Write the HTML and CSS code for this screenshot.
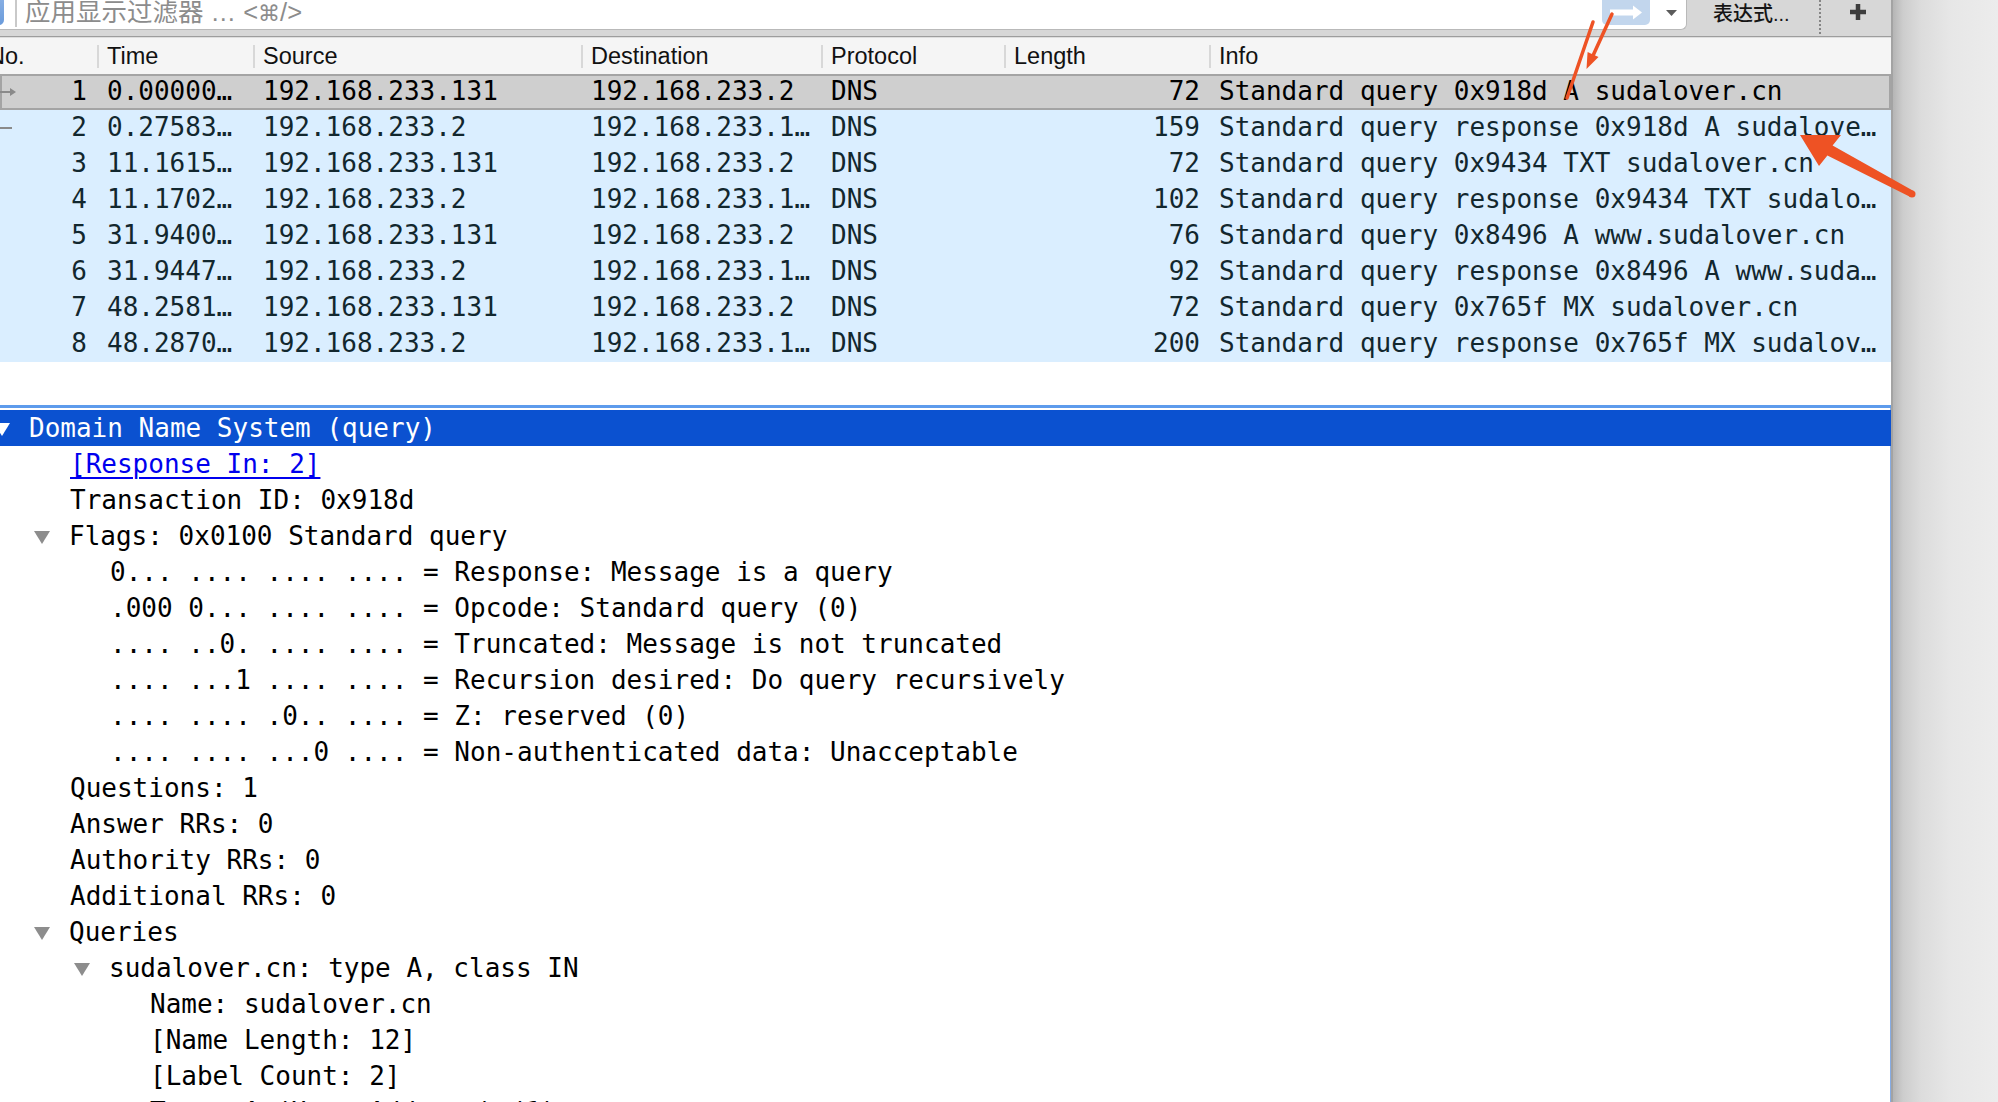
FILE: index.html
```html
<!DOCTYPE html>
<html lang="zh-CN">
<head>
<meta charset="utf-8">
<title>Wireshark</title>
<link rel="stylesheet" href="styles.css">
</head>
<body>
<div class="app">
  <div class="toolbar">
    <div class="filter">
      <span class="bookmark"></span>
      <span class="fsep"></span>
      <span class="placeholder">应用显示过滤器 … &lt;<span class="cmd">⌘</span>/&gt;</span>
      <span class="apply"><svg width="48" height="25" viewBox="0 0 48 25"><rect x="8" y="9.5" width="25" height="6" fill="#fff"/><polygon points="31,5.5 40,12.5 31,19.5" fill="#fff"/></svg></span>
      <span class="drop"><svg width="11" height="6" viewBox="0 0 11 6"><polygon points="0,0 11,0 5.5,6" fill="#5b5b5b"/></svg></span>
    </div>
    <div class="expr">表达式...</div>
    <div class="dots"></div>
    <div class="plus"><svg width="16" height="16" viewBox="0 0 16 16"><rect x="5.75" y="0" width="4.5" height="16" fill="#3d3d3d"/><rect x="0" y="5.75" width="16" height="4.5" fill="#3d3d3d"/></svg></div>
  </div>

  <div class="list">
    <div class="hrow">
      <div class="hc hc-no"><span>No.</span></div>
      <div class="hc">Time</div>
      <div class="hc">Source</div>
      <div class="hc">Destination</div>
      <div class="hc">Protocol</div>
      <div class="hc">Length</div>
      <div class="hc">Info</div>
    </div>
    <div class="prow sel">
      <div class="pc c-no"><svg class="ind" width="16" height="10" viewBox="0 0 16 10"><line x1="0" y1="5" x2="11" y2="5" stroke="#8a8a8a" stroke-width="2"/><polygon points="10,1 16,5 10,9" fill="#8a8a8a"/></svg><span class="num">1</span></div>
      <div class="pc">0.00000…</div>
      <div class="pc">192.168.233.131</div>
      <div class="pc">192.168.233.2</div>
      <div class="pc">DNS</div>
      <div class="pc c-len">72</div>
      <div class="pc">Standard query 0x918d A sudalover.cn</div>
    </div>
    <div class="prow">
      <div class="pc c-no"><svg class="ind" width="16" height="10" viewBox="0 0 16 10"><line x1="0" y1="5" x2="12" y2="5" stroke="#8a8a8a" stroke-width="2"/></svg><span class="num">2</span></div>
      <div class="pc">0.27583…</div>
      <div class="pc">192.168.233.2</div>
      <div class="pc">192.168.233.1…</div>
      <div class="pc">DNS</div>
      <div class="pc c-len">159</div>
      <div class="pc">Standard query response 0x918d A sudalove…</div>
    </div>
    <div class="prow">
      <div class="pc c-no"><span class="num">3</span></div>
      <div class="pc">11.1615…</div>
      <div class="pc">192.168.233.131</div>
      <div class="pc">192.168.233.2</div>
      <div class="pc">DNS</div>
      <div class="pc c-len">72</div>
      <div class="pc">Standard query 0x9434 TXT sudalover.cn</div>
    </div>
    <div class="prow">
      <div class="pc c-no"><span class="num">4</span></div>
      <div class="pc">11.1702…</div>
      <div class="pc">192.168.233.2</div>
      <div class="pc">192.168.233.1…</div>
      <div class="pc">DNS</div>
      <div class="pc c-len">102</div>
      <div class="pc">Standard query response 0x9434 TXT sudalo…</div>
    </div>
    <div class="prow">
      <div class="pc c-no"><span class="num">5</span></div>
      <div class="pc">31.9400…</div>
      <div class="pc">192.168.233.131</div>
      <div class="pc">192.168.233.2</div>
      <div class="pc">DNS</div>
      <div class="pc c-len">76</div>
      <div class="pc">Standard query 0x8496 A www.sudalover.cn</div>
    </div>
    <div class="prow">
      <div class="pc c-no"><span class="num">6</span></div>
      <div class="pc">31.9447…</div>
      <div class="pc">192.168.233.2</div>
      <div class="pc">192.168.233.1…</div>
      <div class="pc">DNS</div>
      <div class="pc c-len">92</div>
      <div class="pc">Standard query response 0x8496 A www.suda…</div>
    </div>
    <div class="prow">
      <div class="pc c-no"><span class="num">7</span></div>
      <div class="pc">48.2581…</div>
      <div class="pc">192.168.233.131</div>
      <div class="pc">192.168.233.2</div>
      <div class="pc">DNS</div>
      <div class="pc c-len">72</div>
      <div class="pc">Standard query 0x765f MX sudalover.cn</div>
    </div>
    <div class="prow">
      <div class="pc c-no"><span class="num">8</span></div>
      <div class="pc">48.2870…</div>
      <div class="pc">192.168.233.2</div>
      <div class="pc">192.168.233.1…</div>
      <div class="pc">DNS</div>
      <div class="pc c-len">200</div>
      <div class="pc">Standard query response 0x765f MX sudalov…</div>
    </div>
  </div>

  <div class="details">
    <div class="drow l0 sel"><span class="tw open"></span><span>Domain Name System (query)</span></div>
    <div class="drow l1"><span class="tw"></span><span class="link">[Response In: 2]</span></div>
    <div class="drow l1"><span class="tw"></span><span>Transaction ID: 0x918d</span></div>
    <div class="drow l1"><span class="tw open"></span><span>Flags: 0x0100 Standard query</span></div>
    <div class="drow l2"><span class="tw"></span><span>0... .... .... .... = Response: Message is a query</span></div>
    <div class="drow l2"><span class="tw"></span><span>.000 0... .... .... = Opcode: Standard query (0)</span></div>
    <div class="drow l2"><span class="tw"></span><span>.... ..0. .... .... = Truncated: Message is not truncated</span></div>
    <div class="drow l2"><span class="tw"></span><span>.... ...1 .... .... = Recursion desired: Do query recursively</span></div>
    <div class="drow l2"><span class="tw"></span><span>.... .... .0.. .... = Z: reserved (0)</span></div>
    <div class="drow l2"><span class="tw"></span><span>.... .... ...0 .... = Non-authenticated data: Unacceptable</span></div>
    <div class="drow l1"><span class="tw"></span><span>Questions: 1</span></div>
    <div class="drow l1"><span class="tw"></span><span>Answer RRs: 0</span></div>
    <div class="drow l1"><span class="tw"></span><span>Authority RRs: 0</span></div>
    <div class="drow l1"><span class="tw"></span><span>Additional RRs: 0</span></div>
    <div class="drow l1"><span class="tw open"></span><span>Queries</span></div>
    <div class="drow l2"><span class="tw open"></span><span>sudalover.cn: type A, class IN</span></div>
    <div class="drow l3"><span class="tw"></span><span>Name: sudalover.cn</span></div>
    <div class="drow l3"><span class="tw"></span><span>[Name Length: 12]</span></div>
    <div class="drow l3"><span class="tw"></span><span>[Label Count: 2]</span></div>
    <div class="drow l3"><span class="tw"></span><span>Type: A (Host Address) (1)</span></div>
  </div>
</div>
<div class="desk"></div>

<svg class="annot" width="1998" height="1102" viewBox="0 0 1998 1102">
  <line x1="1593" y1="22" x2="1567" y2="98" stroke="#ee5224" stroke-width="3.5" stroke-linecap="round"/>
  <line x1="1612" y1="14" x2="1591" y2="60" stroke="#ee5224" stroke-width="3.5" stroke-linecap="round"/>
  <polygon points="1586.5,69 1598.5,56.9 1587.6,51.9" fill="#ee5224"/>
  <polygon points="1800,135 1841,135 1832.6,145.6 1913.6,190.9 1910.4,197.1 1827.4,155.4 1819,166" fill="#ee5224"/>
  <circle cx="1912" cy="194" r="3.5" fill="#ee5224"/>
</svg>
</body>
</html>
```

FILE: styles.css
```css
html, body {
  margin: 0;
  padding: 0;
}

body {
  width: 1998px;
  height: 1102px;
  overflow: hidden;
  display: flex;
  position: relative;
  font-family: "Liberation Sans", "Noto Sans CJK SC", sans-serif;
  background: #ececec;
}

.app {
  flex: none;
  width: 1891px;
  height: 1102px;
  border-right: 2px solid #a3a3a3;
  background: #ffffff;
  display: flex;
  flex-direction: column;
  overflow: hidden;
}

.desk {
  flex: 1;
  background: linear-gradient(to right, #b5b5b5 0px, #cdcdcd 10px, #dcdcdc 28px, #e7e7e7 58px, #ececec 105px);
}

/* ---------- toolbar ---------- */
.toolbar {
  flex: none;
  height: 36px;
  background: #d7d7d7;
  border-bottom: 1px solid #9d9d9d;
  display: flex;
  align-items: flex-start;
}

.filter {
  flex: none;
  margin-left: -12px;
  width: 1699px;
  height: 30px;
  box-sizing: border-box;
  background: #ffffff;
  border: 1px solid #b9b9b9;
  border-top: none;
  border-radius: 0 0 6px 6px;
  display: flex;
  align-items: flex-start;
}

.bookmark {
  flex: none;
  width: 15px;
  height: 25px;
  background: linear-gradient(#86aee3, #6a9bdb);
  border-radius: 0 0 5px 0;
}

.fsep {
  flex: none;
  margin-left: 11px;
  width: 2px;
  height: 27px;
  background: #c9c9c9;
}

.placeholder {
  margin-left: 8px;
  font-family: "Liberation Sans", "Noto Sans CJK SC", "DejaVu Sans", sans-serif;
  font-size: 25.5px;
  line-height: 25px;
  color: #8c8c8c;
  white-space: pre;
}

.cmd {
  font-family: "DejaVu Sans", sans-serif;
  font-size: 22px;
}

.apply {
  flex: none;
  margin-left: auto;
  width: 48px;
  height: 25px;
  background: #c2d6ed;
  border-radius: 0 0 5px 5px;
  display: flex;
}

.drop {
  flex: none;
  margin-left: 16px;
  margin-right: 9px;
  margin-top: 10px;
  display: flex;
}

.expr {
  flex: none;
  width: 132px;
  box-sizing: border-box;
  padding-left: 26px;
  padding-top: 1px;
  font-family: "Liberation Sans", "Noto Sans CJK SC", sans-serif;
  font-size: 20px;
  font-weight: 500;
  line-height: 26px;
  color: #151515;
  white-space: nowrap;
}

.dots {
  flex: none;
  width: 0;
  height: 34px;
  border-left: 2px dotted #858585;
}

.plus {
  flex: none;
  padding-left: 29px;
  padding-top: 4px;
  display: flex;
}

/* ---------- packet list ---------- */
.list {
  flex: none;
  height: 368px;
  background: #ffffff;
  overflow: hidden;
}

.hrow,
.prow {
  display: grid;
  grid-template-columns: 97px 156px 328px 240px 183px 205px 682px;
  height: 36px;
  align-items: center;
}

.hrow {
  border-top: 1px solid #dedede;
  height: 36px;
  background: #f5f5f5;
  font-family: "Liberation Sans", sans-serif;
  font-size: 23.5px;
  color: #111111;
}

.hc {
  height: 36px;
  line-height: 36px;
  padding-left: 10px;
  white-space: nowrap;
  overflow: hidden;
  background: linear-gradient(#d8d8d8, #d8d8d8) no-repeat 0 50% / 2px 23px;
}

.hc-no {
  padding-left: 0;
  background: none;
}

.hc-no span {
  margin-left: -12px;
}

.prow {
  background: #daeeff;
  color: #12272e;
  font-family: "DejaVu Sans Mono", monospace;
  font-size: 26px;
}

.prow.sel {
  background: #cfcfcf;
  color: #000000;
  box-shadow: inset 0 0 0 2px #a4a4a4;
}

.pc {
  padding-left: 10px;
  padding-bottom: 2px;
  white-space: pre;
  overflow: hidden;
  line-height: 34px;
}

.c-no {
  padding-left: 0;
  padding-right: 10px;
  display: flex;
  align-items: center;
}

.c-no .ind {
  flex: none;
  margin-top: 2px;
}

.c-no .num {
  margin-left: auto;
}

.c-len {
  text-align: right;
  padding-left: 0;
  padding-right: 9px;
}

/* ---------- details ---------- */
.details {
  flex: 1;
  border-top: 3px solid #5d9bec;
  padding-top: 2px;
  background: #ffffff;
  box-shadow: inset -1px 0 0 #86ace4;
  overflow: hidden;
}

.drow {
  height: 36px;
  display: flex;
  align-items: center;
  font-family: "DejaVu Sans Mono", monospace;
  font-size: 26px;
  line-height: 36px;
  color: #000000;
  white-space: pre;
}

.l0 { padding-left: 0; }
.l1 { padding-left: 40px; }
.l2 { padding-left: 80px; }
.l3 { padding-left: 120px; }

.tw {
  flex: none;
  width: 17px;
  height: 13px;
  margin-left: -6px;
  margin-right: 19px;
  margin-top: 2px;
}

.tw.open {
  width: 0;
  height: 0;
  border-left: 8.5px solid transparent;
  border-right: 8.5px solid transparent;
  border-top: 13px solid #8d8d8d;
}

.drow.sel {
  background: #0b51d0;
  color: #ffffff;
}

.drow.sel .tw.open {
  border-top-color: #ffffff;
}

.link {
  color: #0000ee;
  text-decoration: underline;
  text-decoration-thickness: 2px;
  text-underline-offset: 4px;
}

/* ---------- annotation overlay ---------- */
.annot {
  position: absolute;
  left: 0;
  top: 0;
  pointer-events: none;
}
```
